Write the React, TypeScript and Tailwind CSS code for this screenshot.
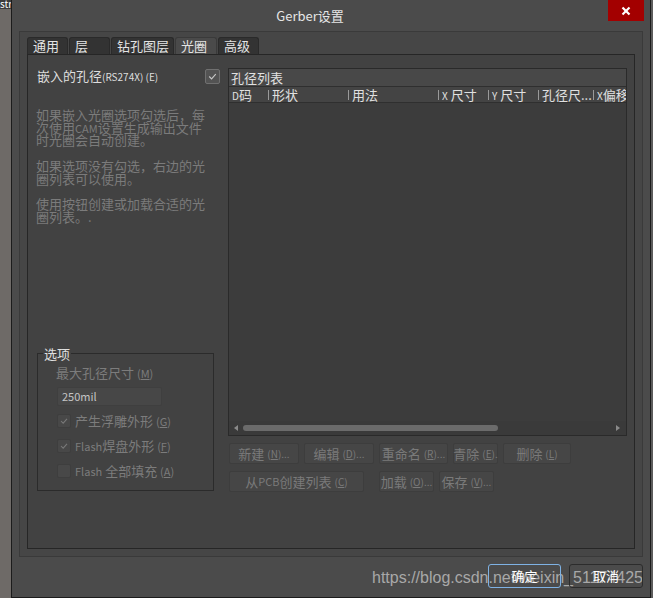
import React from "react";

const Tick = ({ color, w = 14 }: { color: string; w?: number }) => (
  <svg width={w} height={w} viewBox="0 0 14 14">
    <polyline points="3.5,7 6,9.5 10.5,4.5" fill="none" stroke={color} strokeWidth="1.2" />
  </svg>
);

const L = ({ children, size = "text-[10px]" }: { children: React.ReactNode; size?: string }) => (
  <span className={size}>{children}</span>
);

const U = ({ c }: { c: string }) => <span className="underline underline-offset-1">{c}</span>;

function Btn({ w, children, ml = "" }: { w: string; children: React.ReactNode; ml?: string }) {
  return (
    <div
      className={`${w} ${ml} h-[21px] shrink-0 rounded-[2px] border border-[#3d3d3d] bg-[#464646] flex items-center justify-center text-[13px] text-[#7a7a7a] whitespace-nowrap leading-none`}
    >
      {children}
    </div>
  );
}

function Sep() {
  return <span className="w-px h-[10px] bg-[#9a9a9a] shrink-0" />;
}

function Col({ w, first, children }: { w: string; first?: boolean; children: React.ReactNode }) {
  return (
    <div className={`${w} shrink-0 flex items-center h-[15px] leading-[15px] whitespace-nowrap`}>
      {!first && <Sep />}
      <span className="pl-[3px]">{children}</span>
    </div>
  );
}

export default function App() {
  const tabs = [
    { t: "通用", w: "w-[41px]" },
    { t: "层", w: "w-[41px]" },
    { t: "钻孔图层", w: "w-[63px]" },
    { t: "光圈", w: "w-[42px]", active: true },
    { t: "高级", w: "w-[41px]" },
  ];
  return (
    <div className="w-[653px] h-[598px] flex overflow-hidden bg-[#4b4b4b] font-['Noto_Sans_CJK_SC',sans-serif] relative">
      {/* left background strip */}
      <div className="w-[11px] shrink-0 flex flex-col">
        <div className="h-[9px] bg-[#3b3b3b] text-[10px] leading-[8px] text-white overflow-hidden whitespace-nowrap">str</div>
        <div className="flex-1 bg-[#6e6a67]" />
      </div>

      {/* dialog */}
      <div className="w-[640px] h-[598px] shrink-0 border-x border-b border-[#1c1c1c] bg-[#4b4b4b] flex flex-col">
        {/* title bar */}
        <div className="h-[31px] flex items-start shrink-0">
          <div className="flex-1 h-[31px] flex items-center justify-center text-[13px] text-[#e6e6e6]">Gerber设置</div>
          <div className="w-[36px] h-[21px] bg-[#a30000] flex items-center justify-center mr-[6px]">
            <svg width="10" height="10" viewBox="0 0 10 10">
              <line x1="1.5" y1="1.5" x2="8.5" y2="8.5" stroke="#fff" strokeWidth="2.2" />
              <line x1="8.5" y1="1.5" x2="1.5" y2="8.5" stroke="#fff" strokeWidth="2.2" />
            </svg>
          </div>
        </div>

        {/* panel */}
        <div className="mx-[7px] h-[526px] shrink-0 border border-[#3a3a3a] bg-[#464646] flex flex-col px-[7px] pt-[5px] pb-[7px]">
          {/* tabs */}
          <div className="flex gap-[1px] h-[17px] shrink-0">
            {tabs.map((t) => (
              <div
                key={t.t}
                className={`${t.w} h-[17px] rounded-t-[3px] border border-b-0 pl-[5px] text-[13px] leading-[16px] text-[#e4e4e4] ${
                  t.active ? "bg-[#4a4a4a] border-[#3a3a3a]" : "bg-[#333333] border-[#2a2a2a]"
                }`}
              >
                {t.t}
              </div>
            ))}
          </div>

          {/* content */}
          <div className="h-[495px] shrink-0 border border-[#262626] bg-[#424242] flex">
            {/* left column */}
            <div className="w-[200px] shrink-0 flex flex-col">
              <div className="mt-[13px] h-[16px] flex items-center pl-[9px] pr-[8px]">
                <span className="text-[13px] leading-[16px] text-[#dedede] whitespace-nowrap">
                  嵌入的孔径<L>(RS274X) (E)</L>
                </span>
                <div className="ml-auto w-[15px] h-[15px] rounded-[2px] border border-[#707070] bg-[#535353] flex items-center justify-center">
                  <Tick color="#c8c8c8" w={13} />
                </div>
              </div>

              <div className="mt-[25px] pl-[8px] text-[13px] leading-[12.7px] text-[#7b7b7b] whitespace-nowrap">
                <div>如果嵌入光圈选项勾选后，每</div>
                <div>次使用<L size="text-[11px]">CAM</L>设置生成输出文件</div>
                <div>时光圈会自动创建。</div>
                <div className="h-[12.7px]" />
                <div>如果选项没有勾选，右边的光</div>
                <div>圈列表可以使用。</div>
                <div className="h-[12.7px]" />
                <div>使用按钮创建或加载合适的光</div>
                <div>圈列表。.</div>
              </div>

              {/* options group */}
              <div className="mt-auto mb-[57px] ml-[9px] w-[177px] h-[138px] border border-[#2b2b2b] relative flex flex-col">
                <div className="absolute left-[5px] top-[-8px] px-[1px] bg-[#424242] text-[13px] leading-[16px] text-[#e0e0e0]">选项</div>
                <div className="mt-[11px] pl-[18px] h-[16px] text-[13px] leading-[16px] text-[#7c7c7c] whitespace-nowrap">
                  最大孔径尺寸 <L size="text-[11px]">(<U c="M" />)</L>
                </div>
                <div className="mt-[6px] ml-[19px] w-[105px] h-[19px] rounded-[2px] border border-[#3f3f3f] bg-[#474747] pl-[4px] text-[11px] leading-[17px] text-[#c4c4c4]">
                  250mil
                </div>
                {[
                  { c: true, l: <>产生浮雕外形 <L size="text-[11px]">(<U c="G" />)</L></>, mt: "mt-[7px]" },
                  { c: true, l: <><L size="text-[11px]">Flash</L>焊盘外形 <L size="text-[11px]">(<U c="F" />)</L></>, mt: "mt-[9px]" },
                  { c: false, l: <><L size="text-[11px]">Flash</L> 全部填充 <L size="text-[11px]">(<U c="A" />)</L></>, mt: "mt-[9px]" },
                ].map((r, i) => (
                  <div key={i} className={`${r.mt} ml-[19px] h-[16px] flex items-center gap-[4px]`}>
                    <div className="w-[14px] h-[14px] rounded-[2px] border border-[#3e3e3e] bg-[#484848] flex items-center justify-center">
                      {r.c && <Tick color="#7a7a7a" w={12} />}
                    </div>
                    <span className="text-[13px] leading-[16px] text-[#7c7c7c] whitespace-nowrap">{r.l}</span>
                  </div>
                ))}
              </div>
            </div>

            {/* right column */}
            <div className="flex-1 min-w-0 mr-[7px] flex flex-col">
              <div className="mt-[13px] h-[368px] border border-[#2a2a2a] bg-[#3c3c3c] flex flex-col overflow-hidden">
                <div className="h-[17px] bg-[#484848] pl-[2px] text-[13px] leading-[17px] text-[#e0e0e0] shrink-0">孔径列表</div>
                <div className="h-[17px] border-y border-[#2f2f2f] bg-[#444444] flex items-center text-[13px] text-[#e0e0e0] shrink-0 overflow-hidden">
                  <Col w="w-[39px]" first>
                    <L>D</L>码
                  </Col>
                  <Col w="w-[80px]">形状</Col>
                  <Col w="w-[90px]">用法</Col>
                  <Col w="w-[50px]">
                    <L>X</L> 尺寸
                  </Col>
                  <Col w="w-[50px]">
                    <L>Y</L> 尺寸
                  </Col>
                  <Col w="w-[55px]">孔径尺...</Col>
                  <Col w="w-[32px]">
                    <L>X</L>偏移
                  </Col>
                </div>
                <div className="flex-1" />
                <div className="h-[14px] shrink-0 flex items-center bg-[#3a3a3a]">
                  <svg width="4" height="6" viewBox="0 0 4 6" className="ml-[5px]">
                    <polygon points="4,0 0,3 4,6" fill="#8a8a8a" />
                  </svg>
                  <div className="ml-[5px] w-[255px] h-[6px] rounded-full bg-[#6b6b6b]" />
                  <svg width="4" height="6" viewBox="0 0 4 6" className="ml-auto mr-[6px]">
                    <polygon points="0,0 4,3 0,6" fill="#8a8a8a" />
                  </svg>
                </div>
              </div>

              <div className="mt-[7px] pl-[1px] flex gap-[5px]">
                <Btn w="w-[70px]">新建&nbsp;<L>(<U c="N" />)...</L></Btn>
                <Btn w="w-[70px]">编辑&nbsp;<L>(<U c="D" />)...</L></Btn>
                <Btn w="w-[69px]">重命名&nbsp;<L>(<U c="R" />)...</L></Btn>
                <Btn w="w-[45px]">青除&nbsp;<L>(<U c="E" />).</L></Btn>
                <Btn w="w-[68px]">删除&nbsp;<L>(<U c="L" />)</L></Btn>
              </div>
              <div className="mt-[7px] pl-[1px] flex">
                <Btn w="w-[135px]">从<L size="text-[11px]">PCB</L>创建列表&nbsp;<L>(<U c="C" />)</L></Btn>
                <Btn w="w-[55px]" ml="ml-[15px]">加载&nbsp;<L>(<U c="O" />)...</L></Btn>
                <Btn w="w-[55px]" ml="ml-[5px]">保存&nbsp;<L>(<U c="V" />)...</L></Btn>
              </div>
            </div>
          </div>
        </div>

        {/* bottom buttons */}
        <div className="mt-[7px] h-[24px] flex justify-end gap-[8px] pr-[7px] shrink-0">
          <div className="relative z-10 w-[73px] h-[24px] rounded-[3px] border border-[#7fb2e4] flex items-center justify-center text-[13px] text-white">确定</div>
          <div className="relative z-10 w-[74px] h-[24px] rounded-[3px] border border-[#2c2c2c] flex items-center justify-center text-[13px] text-white">取消</div>
        </div>
      </div>

      {/* right background strip */}
      <div className="flex-1 bg-[#5c5c5c]" />

      {/* watermark */}
      <div className="absolute left-[372px] top-[569px] text-[16px] leading-[18px] font-['Liberation_Sans',sans-serif] text-[#a8a8a8] whitespace-nowrap">
        https://blog.csdn.net/weixin_51174425
      </div>
    </div>
  );
}
